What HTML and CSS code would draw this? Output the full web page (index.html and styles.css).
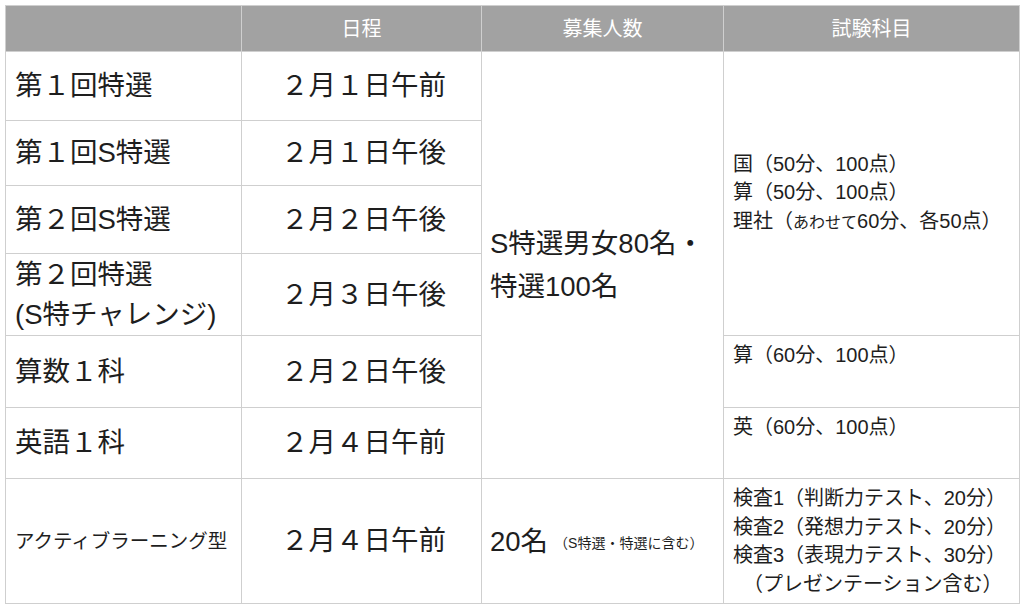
FILE: index.html
```html
<!DOCTYPE html>
<html lang="ja">
<head>
<meta charset="utf-8">
<title>入試日程</title>
<link rel="stylesheet" href="styles.css">
</head>
<body>
<table class="exam">
  <colgroup>
    <col class="c1"><col class="c2"><col class="c3"><col class="c4">
  </colgroup>
  <thead>
    <tr class="rh">
      <th></th>
      <th>日程</th>
      <th>募集人数</th>
      <th>試験科目</th>
    </tr>
  </thead>
  <tbody>
    <tr class="r1">
      <td class="name">第１回特選</td>
      <td class="date">２月１日午前</td>
      <td class="cap" rowspan="6">S特選男女80名・<br>特選100名</td>
      <td class="subj" rowspan="4">国（50分、100点）<br>算（50分、100点）<br>理社（<span class="sm">あわせて</span>60分、各50点）</td>
    </tr>
    <tr class="r2">
      <td class="name">第１回S特選</td>
      <td class="date">２月１日午後</td>
    </tr>
    <tr class="r3">
      <td class="name">第２回S特選</td>
      <td class="date">２月２日午後</td>
    </tr>
    <tr class="r4">
      <td class="name">第２回特選<br>(S特チャレンジ)</td>
      <td class="date">２月３日午後</td>
    </tr>
    <tr class="r5">
      <td class="name">算数１科</td>
      <td class="date">２月２日午後</td>
      <td class="subj top">算（60分、100点）</td>
    </tr>
    <tr class="r6">
      <td class="name">英語１科</td>
      <td class="date">２月４日午前</td>
      <td class="subj top">英（60分、100点）</td>
    </tr>
    <tr class="r7">
      <td class="name small">アクティブラーニング型</td>
      <td class="date">２月４日午前</td>
      <td class="cap">20名<span class="note">（S特選・特選に含む）</span></td>
      <td class="subj">検査1（判断力テスト、20分）<br>検査2（発想力テスト、20分）<br>検査3（表現力テスト、30分）<br>　（プレゼンテーション含む）</td>
    </tr>
  </tbody>
</table>
</body>
</html>
```

FILE: styles.css
```css
html, body {
  margin: 0;
  padding: 0;
  background: #ffffff;
}
body {
  padding: 5px 0 0 5px;
  font-family: "Liberation Sans", "Noto Sans CJK JP", sans-serif;
  color: #1e1e1e;
}
.exam {
  border-collapse: collapse;
  table-layout: fixed;
  width: 1014px;
}
.c1 { width: 236px; }
.c2 { width: 240px; }
.c3 { width: 242px; }
.c4 { width: 296px; }

.exam th,
.exam td {
  border: 1px solid #cfcfcf;
  padding: 0;
}
.exam th {
  background: #a2a2a2;
  color: #ffffff;
  font-weight: normal;
  font-size: 20px;
  line-height: 24px;
  text-align: center;
  vertical-align: middle;
}
.rh { height: 46px; }
.r1 { height: 69px; }
.r2 { height: 65px; }
.r3 { height: 68px; }
.r4 { height: 82px; }
.r5 { height: 72px; }
.r6 { height: 71px; }
.r7 { height: 124px; }

.exam .name {
  font-size: 27.5px;
  line-height: 40px;
  padding: 0 6px 0 9px;
  vertical-align: middle;
}
.exam .name.small {
  font-size: 19.5px;
}
.exam .date {
  font-size: 27.5px;
  line-height: 40px;
  text-align: center;
  vertical-align: middle;
  padding-left: 4px;
}
.exam .cap {
  font-size: 27.5px;
  line-height: 43px;
  padding: 0 6px 0 8px;
  vertical-align: middle;
}
.note {
  font-size: 14px;
  margin-left: 6px;
  vertical-align: 3px;
  line-height: 1;
}
.exam .subj {
  font-size: 20px;
  line-height: 28.5px;
  padding: 5px 6px 5px 9px;
  vertical-align: middle;
}
.exam .subj.top {
  vertical-align: top;
}
.sm {
  font-size: 16px;
}
```
